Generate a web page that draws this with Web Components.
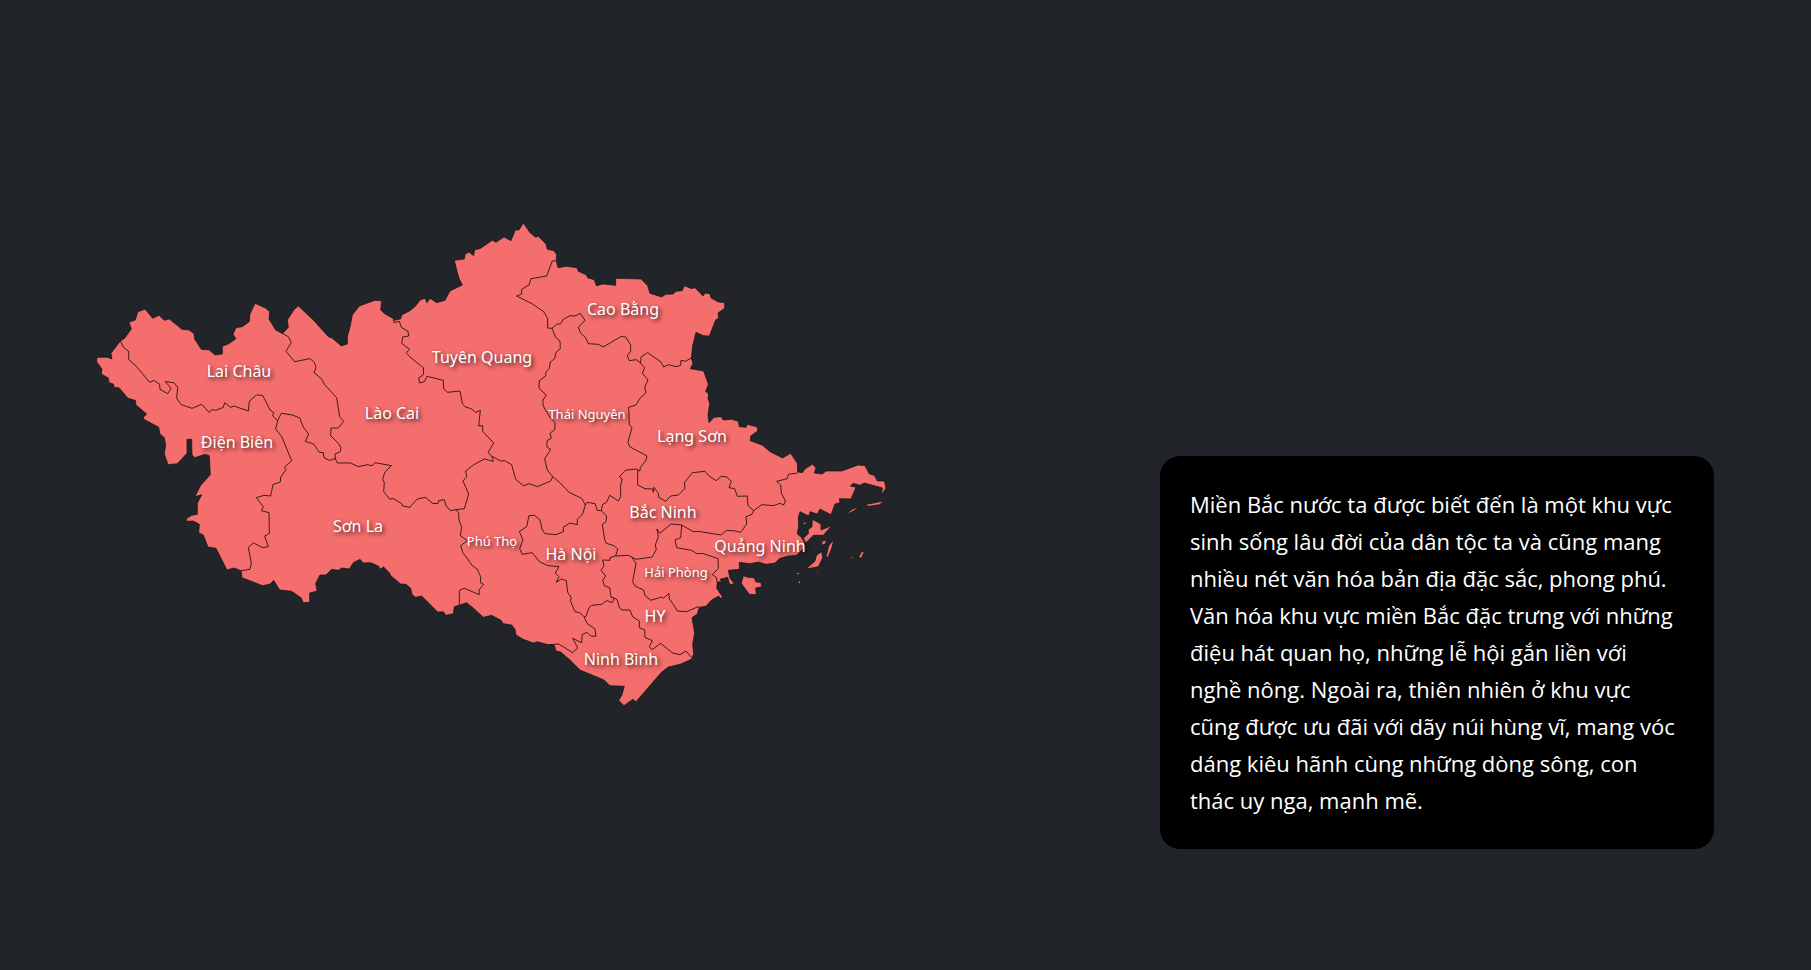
<!DOCTYPE html>
<html lang="vi">
<head>
<meta charset="utf-8">
<meta name="viewport" content="width=device-width, initial-scale=1">
<title>Miền Bắc</title>
<style>
  body { margin: 0; background: #212529; color: #fff; font-family: "Noto Sans", sans-serif; }
</style>
</head>
<body>
<region-page>
  <region-map slot="map"></region-map>
  <info-card slot="info">Miền Bắc nước ta được biết đến là một khu vực sinh sống lâu đời của dân tộc ta và cũng mang nhiều nét văn hóa bản địa đặc sắc, phong phú. Văn hóa khu vực miền Bắc đặc trưng với những điệu hát quan họ, những lễ hội gắn liền với nghề nông. Ngoài ra, thiên nhiên ở khu vực cũng được ưu đãi với dãy núi hùng vĩ, mang vóc dáng kiêu hãnh cùng những dòng sông, con thác uy nga, mạnh mẽ.</info-card>
</region-page>

<template id="page-tpl">
  <style>
    :host { display: block; }
    main { box-sizing: border-box; min-height: 100vh; padding: 0 97px 0 90px; display: grid;
      grid-template-columns: minmax(0, 804fr) minmax(0, 266fr) minmax(0, 554fr); align-items: center; }
    .info { grid-column: 3; align-self: end; margin-bottom: 121px; }
  </style>
  <main><slot name="map"></slot><div class="info"><slot name="info"></slot></div></main>
</template>

<template id="card-tpl">
  <style>
    :host { display: block; }
    p { margin: 0; padding: 30px 32px 30px 30px; background: #000; border-radius: 20px; font-family: "Open Sans", "Noto Sans", sans-serif; font-size: 22px; line-height: 37px; }
  </style>
  <p><slot></slot></p>
</template>

<template id="map-tpl">
  <style>
    :host { display: block; }
    svg { display: block; width: 100%; height: auto; }
    .land { fill: #f56e6e; stroke: #111; stroke-width: 2; stroke-linejoin: round; }
    .border { fill: none; stroke: #000; stroke-width: 3; stroke-opacity: .75; stroke-linejoin: round; }
    text { fill: #fff; font-size: 16px; text-anchor: middle; text-shadow: 2px 2px 4px rgba(0, 0, 0, .8); }
    .small { font-size: 13px; }
  </style>
  <svg viewBox="90 215 804 540" role="img" aria-label="Bản đồ miền Bắc">
    <g transform="scale(.33333)">
      <path class="land" d="M290 1080 292 1072 322 1072 336 1077 333 1060 361 1023 374 1015 394 987 387 967 406 960 413 936 435 927 458 955 477 946 493 961 508 957 546 988 567 990 582 1001 584 1018 604 1048 628 1050 645 1065 667 1062 667 1039 685 1032 708 1016 699 1003 708 983 727 980 748 965 750 942 765 910 796 924 809 935 807 957 827 990 848 1001 865 982 862 960 882 929 895 918 940 960 985 1010 996 1014 1024 1038 1042 1032 1042 1010 1050 982 1057 945 1078 918 1125 901 1145 902 1142 930 1155 942 1178 955 1183 961 1202 957 1205 945 1230 932 1247 918 1260 900 1275 895 1281 908 1290 895 1310 908 1335 901 1350 873 1387 855 1377 835 1370 810 1363 781 1393 777 1395 763 1407 756 1421 767 1424 749 1440 746 1477 721 1488 727 1512 711 1533 722 1546 690 1557 690 1570 669 1590 698 1607 712 1615 709 1638 732 1642 748 1662 752 1670 764 1669 782 1674 803 1698 799 1731 803 1735 814 1758 824 1764 834 1783 839 1789 857 1810 852 1847 856 1847 835 1923 837 1943 857 1950 880 1985 891 1997 883 2020 882 2027 874 2047 872 2053 857 2075 866 2085 863 2109 888 2116 879 2130 881 2133 894 2155 906 2174 908 2174 925 2154 939 2156 954 2147 960 2128 1008 2110 1007 2088 997 2078 1038 2074 1075 2079 1090 2071 1106 2111 1113 2125 1153 2117 1174 2126 1182 2124 1195 2129 1210 2124 1245 2127 1268 2142 1252 2163 1250 2170 1260 2195 1258 2215 1264 2218 1280 2238 1282 2242 1273 2272 1281 2273 1293 2252 1308 2251 1322 2288 1336 2310 1355 2348 1374 2372 1360 2392 1390 2393 1416 2407 1418 2416 1406 2437 1393 2448 1403 2443 1419 2467 1422 2478 1413 2525 1413 2575 1395 2595 1397 2608 1422 2623 1426 2632 1443 2653 1443 2658 1465 2643 1486 2648 1464 2593 1449 2580 1456 2560 1450 2551 1458 2568 1462 2553 1497 2518 1496 2520 1508 2505 1512 2493 1544 2460 1527 2452 1542 2430 1535 2427 1548 2400 1535 2395 1552 2396 1578 2392 1602 2404 1612 2414 1628 2411 1645 2390 1666 2365 1668 2340 1675 2325 1689 2298 1693 2275 1686 2250 1691 2218 1687 2218 1708 2185 1711 2190 1735 2203 1751 2189 1754 2183 1732 2160 1738 2165 1746 2152 1745 2150 1765 2167 1790 2164 1797 2156 1788 2135 1800 2116 1820 2097 1825 2092 1842 2076 1853 2084 1900 2078 1932 2081 1962 2074 1978 2040 1993 2005 2001 1985 2016 1908 2105 1898 2098 1872 2117 1856 2101 1866 2085 1873 2059 1830 2057 1812 2040 1740 2010 1710 1980 1682 1956 1668 1953 1663 1936 1640 1933 1612 1925 1600 1929 1570 1918 1548 1905 1545 1888 1535 1875 1510 1871 1503 1861 1475 1846 1450 1852 1423 1827 1400 1808 1363 1820 1360 1841 1337 1846 1330 1835 1313 1836 1265 1788 1247 1792 1237 1785 1232 1765 1218 1753 1202 1752 1173 1728 1168 1718 1150 1700 1142 1708 1135 1698 1112 1688 1090 1689 1080 1678 1060 1688 1048 1707 1025 1704 1015 1711 995 1708 978 1725 960 1725 947 1750 951 1773 929 1779 929 1807 910 1808 904 1794 875 1774 839 1770 821 1741 811 1752 788 1757 726 1733 723 1712 702 1704 681 1710 648 1645 624 1641 610 1605 596 1598 598 1573 580 1563 560 1564 559 1556 575 1546 592 1543 592 1510 605 1484 585 1490 602 1456 631 1424 628 1367 615 1363 585 1373 576 1365 575 1318 561 1318 561 1360 532 1391 504 1394 493 1362 497 1335 493 1313 480 1302 476 1282 447 1266 430 1257 432 1250 440 1242 408 1215 406 1201 384 1195 357 1163 343 1163 340 1152 327 1148 325 1134 304 1122 306 1108 290 1085Z"/>
      <!-- Islands -->
      <path class="land" d="M2437 1558 2463 1572 2463 1590 2495 1577 2470 1606 2440 1606 2418 1628 2410 1615 2426 1600 2424 1590 2436 1580ZM2408 1568 2423 1566 2412 1575ZM2467 1623 2480 1621 2475 1633 2464 1635ZM2502 1618 2486 1638 2478 1672 2484 1672 2495 1645ZM2465 1655 2468 1673 2455 1700 2418 1707 2445 1683 2450 1665ZM2473 1684 2448 1721 2453 1719ZM2388 1717 2403 1720 2390 1725ZM2392 1745 2402 1742 2401 1753ZM2595 1514 2652 1503 2638 1514 2605 1519ZM2537 1542 2560 1526 2578 1522 2555 1536ZM2547 1665 2558 1672 2559 1680ZM2575 1673 2585 1655 2593 1654 2585 1673ZM2230 1727 2243 1732 2262 1733 2268 1746 2282 1747 2286 1760 2267 1764 2269 1784 2248 1783 2224 1750Z"/>
      <!-- Điện Biên, Lai Châu, Sơn La -->
      <path class="border" d="M361 1023 371 1043 386 1054 386 1078 409 1099 449 1147 462 1141 479 1153 480 1168 503 1181 513 1165 496 1145 522 1148 533 1162 530 1195 544 1214 576 1225 605 1213 628 1238 635 1229 647 1231 670 1222 674 1208 692 1222 702 1218 745 1233 748 1204 769 1185 788 1186 810 1230 821 1238 818 1248 833 1262 827 1287 845 1310 875 1382 853 1402 858 1409 842 1432 841 1446 819 1454 812 1488 792 1486 769 1493 790 1520 784 1532 807 1538 808 1600 794 1608 805 1640 788 1643 760 1629 745 1642 754 1690 750 1708 723 1712"/>
      <path class="border" d="M833 1262 844 1240 877 1245 899 1254 910 1282 926 1302 916 1324 941 1332 958 1357 970 1358 972 1373 988 1381 1006 1376M848 1001 865 1010 874 1027 858 1054 884 1085 930 1076 943 1087 948 1103 942 1118 964 1136 974 1154 1010 1193 1019 1250 1031 1264 1015 1284 993 1284 992 1307 1015 1330 1023 1342 1021 1355 1005 1362 1006 1376 1012 1389 1052 1389 1075 1400 1102 1394 1117 1397 1125 1388 1174 1397 1154 1418 1148 1438 1153 1448 1151 1475 1170 1498 1178 1495 1205 1511 1208 1518 1229 1522 1252 1497 1276 1492 1298 1510 1314 1511 1316 1502 1333 1499 1338 1517 1351 1532 1368 1529 1376 1538 1377 1560 1385 1582 1381 1607 1402 1622 1382 1637 1388 1657 1417 1697 1432 1708 1442 1730 1441 1748 1451 1753 1437 1770 1438 1784 1393 1765 1378 1771 1378 1814"/>
      <!-- Lào Cai, Phú Thọ, Tuyên Quang -->
      <path class="border" d="M1368 1529 1393 1526 1406 1482 1389 1443 1400 1430 1397 1413 1420 1395 1453 1377 1480 1384 1476 1369M1180 960 1183 968 1198 964 1204 982 1224 994 1226 1008 1208 1011 1205 1030 1229 1048 1219 1058 1232 1073 1270 1103 1271 1123 1256 1134 1259 1149 1273 1145 1281 1129 1330 1141 1331 1166 1342 1177 1380 1173 1387 1210 1395 1220 1415 1227 1427 1237 1441 1231 1436 1278 1448 1277 1448 1294 1481 1329 1464 1358 1476 1369 1502 1383 1514 1382 1535 1394 1547 1438 1570 1457 1588 1451 1612 1460 1652 1443 1658 1430"/>
      <!-- Cao Bằng, Thái Nguyên, Lạng Sơn -->
      <path class="border" d="M1669 782 1657 783 1640 828 1593 836 1587 855 1565 868 1565 882 1550 888 1596 911 1631 935 1643 955 1643 984 1656 985 1667 1012 1680 1023 1681 1046 1668 1057 1664 1076 1651 1086 1648 1105 1637 1117 1638 1127 1618 1142 1617 1165 1639 1185 1629 1200 1629 1215 1635 1228 1652 1255 1665 1267 1665 1288 1650 1300 1654 1315 1642 1321 1640 1340 1652 1348 1634 1377 1642 1410 1658 1430 1680 1448 1707 1477 1745 1495 1756 1515 1762 1507 1785 1511 1792 1531 1804 1532"/>
      <path class="border" d="M1656 985 1670 973 1682 971 1690 958 1710 947 1725 948 1741 940 1755 961 1735 982 1742 1000 1756 1012 1765 1031 1795 1033 1810 1041 1864 1009 1877 1011 1892 1035 1892 1054 1882 1067 1888 1082 1909 1079 1921 1089 1924 1070 1943 1058 1983 1086 1991 1101 2005 1094 2028 1100 2042 1096 2043 1081 2056 1084 2074 1074M1921 1089 1934 1103 1927 1119 1944 1140 1934 1162 1938 1178 1920 1195 1908 1215 1886 1222 1888 1275 1896 1282 1884 1327 1889 1340 1941 1368 1937 1383 1921 1402 1920 1413 1908 1407 1876 1411 1858 1431 1867 1437 1862 1455 1862 1490 1855 1503 1829 1486 1820 1507 1808 1513 1804 1532"/>
      <!-- Bắc Ninh, Quảng Ninh, Hải Phòng -->
      <path class="border" d="M1913 1410 1913 1455 1935 1466 1958 1467 1960 1477 1962 1462 1975 1480 1976 1492 1997 1504 2012 1488 2035 1485 2055 1465 2053 1448 2077 1418 2115 1414 2127 1428 2149 1442 2164 1429 2180 1431 2194 1444 2187 1463 2204 1466 2212 1489 2242 1488 2244 1517 2261 1532 2286 1514 2320 1517 2340 1510 2351 1515 2356 1503 2344 1480 2342 1455 2330 1444 2362 1436 2365 1423 2393 1419M2261 1532 2256 1543 2238 1550 2240 1572 2222 1597 2206 1593 2180 1591 2163 1605 2095 1594 2080 1595 2045 1575 2042 1613 2025 1620 2030 1643 2075 1651 2090 1661 2108 1660 2154 1676 2155 1705 2137 1724 2149 1732 2151 1745"/>
      <path class="border" d="M2045 1575 2013 1572 1980 1600 1971 1587 1975 1610 1966 1635 1969 1648 1957 1671 1908 1678 1885 1666 1848 1668M1895 1671 1908 1690 1898 1745 1905 1758 1930 1770 1936 1788 1953 1801 1985 1791 1990 1795 2007 1780 2008 1797 2022 1816 2032 1833 2060 1835 2090 1822 2116 1820"/>
      <!-- Hà Nội, Hưng Yên, Ninh Bình -->
      <path class="border" d="M1804 1532 1820 1548 1818 1565 1807 1573 1814 1618 1819 1630 1842 1637 1853 1647 1847 1668 1830 1673 1830 1681 1808 1680 1812 1698 1803 1711 1817 1728 1808 1740 1813 1757 1829 1763 1833 1792 1843 1794 1837 1808 1820 1802 1805 1813 1775 1816 1767 1823 1758 1849 1753 1851M1756 1515 1748 1542 1732 1558 1732 1574 1710 1569 1690 1582 1690 1595 1668 1604 1635 1601 1627 1590 1620 1560 1604 1546 1587 1547 1580 1580 1558 1595 1569 1620 1559 1646 1567 1663 1597 1658 1618 1685 1644 1697 1677 1700 1666 1719 1677 1730 1669 1747 1684 1737 1699 1742 1703 1777 1714 1793 1711 1802 1725 1835 1741 1839 1753 1851 1761 1870 1785 1887 1788 1909 1772 1908 1761 1897 1746 1904 1745 1928 1718 1915 1733 1944 1718 1958 1676 1932 1650 1934M1843 1794 1852 1800 1858 1822 1865 1830 1890 1830 1898 1850 1918 1863 1918 1883 1934 1890 1935 1912 1957 1922 1948 1940 1956 1949 1982 1930 2018 1959 2040 1964 2058 1953 2074 1972"/>
    </g>
    <text x="239" y="377">Lai Châu</text>
    <text x="237" y="448">Điện Biên</text>
    <text x="358" y="532">Sơn La</text>
    <text x="392" y="419">Lào Cai</text>
    <text x="482" y="363">Tuyên Quang</text>
    <text x="623" y="315">Cao Bằng</text>
    <text x="587" y="419" class="small">Thái Nguyên</text>
    <text x="692" y="442">Lạng Sơn</text>
    <text x="663" y="518">Bắc Ninh</text>
    <text x="760" y="552">Quảng Ninh</text>
    <text x="676" y="577" class="small">Hải Phòng</text>
    <text x="655" y="622">HY</text>
    <text x="621" y="665">Ninh Bình</text>
    <text x="571" y="560">Hà Nội</text>
    <text x="492" y="546" class="small">Phú Thọ</text>
  </svg>
</template>

<script>
  class TemplateElement extends HTMLElement {
    constructor() {
      super();
      const tpl = document.getElementById(this.constructor.template);
      this.attachShadow({ mode: "open" }).append(tpl.content.cloneNode(true));
    }
  }
  class RegionPage extends TemplateElement { static template = "page-tpl"; }
  class RegionMap extends TemplateElement { static template = "map-tpl"; }
  class InfoCard extends TemplateElement { static template = "card-tpl"; }
  customElements.define("region-page", RegionPage);
  customElements.define("region-map", RegionMap);
  customElements.define("info-card", InfoCard);
</script>
</body>
</html>
